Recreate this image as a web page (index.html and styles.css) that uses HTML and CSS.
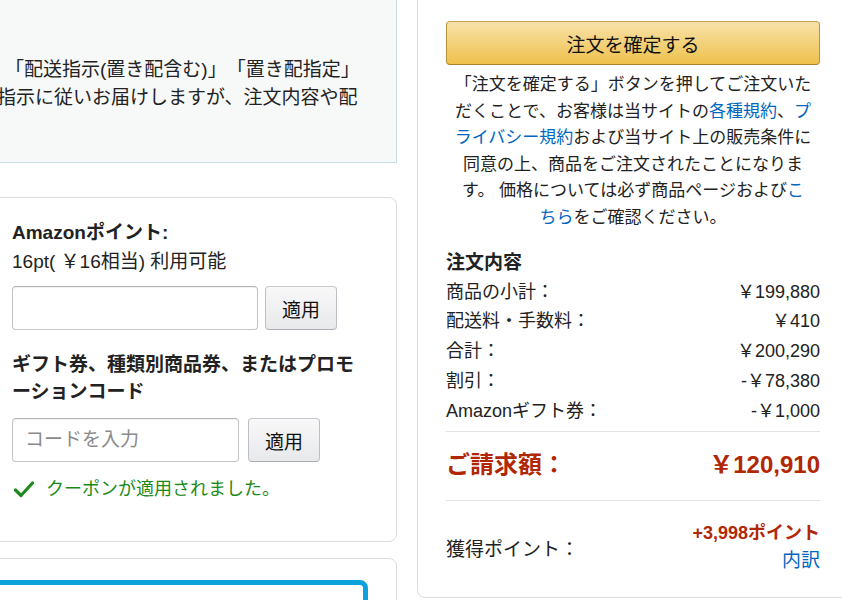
FILE: index.html
```html
<!DOCTYPE html>
<html lang="ja">
<head>
<meta charset="utf-8">
<title>注文を確定する</title>
<link rel="stylesheet" href="styles.css">
</head>
<body>
<div class="page">
  <div class="left">
    <div class="notice">
      <p class="notice-text">「配送指示(置き配含む)」「置き配指定」<br>指示に従いお届けしますが、注文内容や配</p>
    </div>

    <div class="card promo">
      <div class="label">Amazonポイント:</div>
      <div class="text">16pt( ￥16相当) 利用可能</div>
      <div class="form-row">
        <input class="field field-points" type="text">
        <button class="apply" type="button">適用</button>
      </div>
      <div class="label gift">ギフト券、種類別商品券、またはプロモ<br>ーションコード</div>
      <div class="form-row form-row-code">
        <input class="field field-code" type="text" placeholder="コードを入力">
        <button class="apply" type="button">適用</button>
      </div>
      <div class="success">
        <svg class="check" width="20" height="17" viewBox="0 0 20 17" aria-hidden="true"><path d="M1.5 9 L7 14.5 L18.5 2" fill="none" stroke="#1f8a1f" stroke-width="3.2" stroke-linecap="round" stroke-linejoin="round"/></svg>
        <span>クーポンが適用されました。</span>
      </div>
    </div>

    <div class="card next">
      <div class="blue-box"></div>
    </div>
  </div>

  <div class="right">
    <div class="card summary">
      <button class="place-btn" type="button">注文を確定する</button>
      <p class="legal">「注文を確定する」ボタンを押してご注文いた<br>だくことで、お客様は当サイトの<a href="#">各種規約</a>、<a href="#">プ<br>ライバシー規約</a>および当サイト上の販売条件に<br>同意の上、商品をご注文されたことになりま<br>す。 価格については必ず商品ページおよび<a href="#">こ<br>ちら</a>をご確認ください。</p>

      <div class="sum-title">注文内容</div>
      <div class="row"><span>商品の小計：</span><span>￥199,880</span></div>
      <div class="row"><span>配送料・手数料：</span><span>￥410</span></div>
      <div class="row"><span>合計：</span><span>￥200,290</span></div>
      <div class="row"><span>割引：</span><span>-￥78,380</span></div>
      <div class="row"><span>Amazonギフト券：</span><span>-￥1,000</span></div>

      <div class="divider"></div>
      <div class="total"><span>ご請求額：</span><span>￥120,910</span></div>
      <div class="divider divider-2"></div>

      <div class="points">
        <span class="points-label">獲得ポイント：</span>
        <div class="points-value">
          <div class="points-num">+3,998ポイント</div>
          <a class="points-link" href="#">内訳</a>
        </div>
      </div>
    </div>
  </div>
</div>
</body>
</html>
```

FILE: styles.css
```css
* {
  box-sizing: border-box;
}

html,
body {
  margin: 0;
  padding: 0;
}

body {
  width: 842px;
  height: 600px;
  overflow: hidden;
  background: #fff;
  color: #111;
  font-family: "Liberation Sans", "Noto Sans CJK JP", sans-serif;
  text-spacing-trim: space-all;
}

a {
  color: #0066c0;
  text-decoration: none;
}

.page {
  display: flex;
  align-items: flex-start;
  margin-left: -20px;
}

.left {
  flex: none;
  width: 417px;
}

.notice {
  margin-top: -2px;
  height: 165px;
  padding: 57px 0 0 16px;
  background: #f7f8f8;
  border: 1px solid #c9dde3;
}

.notice-text {
  margin: 0;
  font-size: 19px;
  line-height: 28px;
  white-space: nowrap;
  text-indent: 8px;
  color: #222;
}

.card {
  background: #fff;
  border: 1px solid #dddddd;
  border-radius: 8px;
}

.promo {
  margin-top: 34px;
  padding: 20px 0 39px 31px;
}

.label {
  font-size: 19px;
  line-height: 29px;
  font-weight: bold;
  color: #222;
}

.text {
  font-size: 19px;
  line-height: 29px;
  color: #222;
}

.form-row {
  display: flex;
  gap: 7px;
  margin-top: 10px;
}

.form-row-code {
  gap: 9px;
  margin-top: 13px;
}

.field {
  height: 44px;
  padding: 0 12px;
  border: 1px solid #c4c4c4;
  border-top-color: #b4b4b4;
  border-radius: 4px;
  box-shadow: inset 0 1px 1px rgba(0, 0, 0, 0.06);
  font-family: inherit;
  font-size: 19px;
  color: #111;
  background: #fff;
}

.field::placeholder {
  color: #8a8a8a;
}

.field-points {
  width: 246px;
}

.field-code {
  width: 227px;
}

.apply {
  width: 72px;
  height: 44px;
  padding: 0;
  border: 1px solid;
  border-color: #c6c9ce #bcc0c5 #a9acb1;
  border-radius: 4px;
  background: linear-gradient(to bottom, #f8f8f9, #e8e9eb);
  font-family: inherit;
  font-size: 19px;
  color: #111;
}

.gift {
  margin-top: 21px;
  line-height: 27px;
}

.success {
  display: flex;
  align-items: center;
  margin-top: 14px;
  font-size: 18px;
  line-height: 26px;
  color: #198a19;
}

.check {
  margin: 0 12px 0 2px;
}

.next {
  margin-top: 16px;
  height: 100px;
  padding: 21px 28px 0 0;
}

.blue-box {
  height: 90px;
  border: 5px solid #0ea2dc;
  border-radius: 8px;
}

.right {
  flex: none;
  width: 432px;
  margin-left: 20px;
}

.summary {
  margin-top: -10px;
  padding: 30px 28px 21px 28px;
}

.place-btn {
  display: block;
  width: 374px;
  height: 44px;
  padding: 0;
  border: 1px solid;
  border-color: #c8a24a #b8923c #a8842f;
  border-radius: 4px;
  background: linear-gradient(to bottom, #f8e2a9, #efc14c);
  font-family: inherit;
  font-size: 19px;
  color: #111;
}

.legal {
  width: 374px;
  margin: 7px 0 0;
  font-size: 17px;
  line-height: 26.6px;
  text-align: center;
  white-space: nowrap;
  color: #222;
}

.sum-title {
  margin-top: 16px;
  font-size: 19px;
  line-height: 30px;
  font-weight: bold;
  color: #222;
}

.row {
  display: flex;
  justify-content: space-between;
  width: 374px;
  font-size: 18px;
  line-height: 29.75px;
  color: #222;
}

.divider {
  width: 374px;
  margin-top: 5px;
  border-top: 1px solid #e3e3e3;
}

.divider-2 {
  margin-top: 18px;
}

.total {
  display: flex;
  justify-content: space-between;
  width: 374px;
  margin-top: 16px;
  font-size: 24px;
  line-height: 34px;
  font-weight: bold;
  color: #b12704;
}

.points {
  display: flex;
  justify-content: space-between;
  align-items: center;
  width: 374px;
  margin-top: 18px;
}

.points-label {
  font-size: 19px;
  color: #222;
}

.points-value {
  text-align: right;
  line-height: 28px;
}

.points-num {
  font-size: 18px;
  font-weight: bold;
  color: #b12704;
}

.points-link {
  font-size: 19px;
}
```
